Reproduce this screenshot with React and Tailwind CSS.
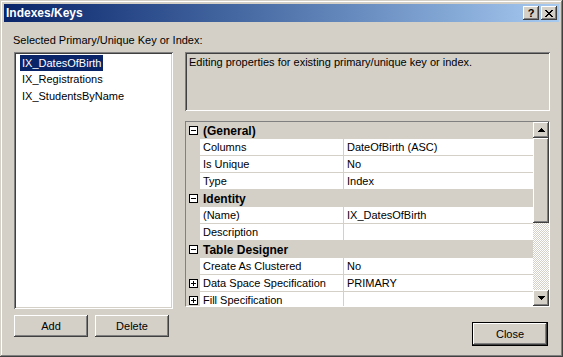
import React from 'react';

const raised = 'shadow-[inset_-1px_-1px_0_#404040,inset_1px_1px_0_#fff,inset_-2px_-2px_0_#808080,inset_2px_2px_0_#d4d0c8]';
const sunken = 'shadow-[inset_1px_1px_0_#808080,inset_-1px_-1px_0_#fff,inset_2px_2px_0_#404040,inset_-2px_-2px_0_#d4d0c8]';

const rows = [
  { cat: '(General)' },
  { label: 'Columns', value: 'DateOfBirth (ASC)' },
  { label: 'Is Unique', value: 'No' },
  { label: 'Type', value: 'Index' },
  { cat: 'Identity' },
  { label: '(Name)', value: 'IX_DatesOfBirth' },
  { label: 'Description', value: '' },
  { cat: 'Table Designer' },
  { label: 'Create As Clustered', value: 'No' },
  { label: 'Data Space Specification', value: 'PRIMARY', expand: true },
  { label: 'Fill Specification', value: '', expand: true },
];

function Toggle({ open }) {
  return (
    <svg width="9" height="9" viewBox="0 0 9 9" className="block" shapeRendering="crispEdges">
      <rect x="0.5" y="0.5" width="8" height="8" fill="#fff" stroke="#000" />
      <path d="M2 4h5v1H2z" fill="#000" />
      {!open && <path d="M4 2h1v5H4z" fill="#000" />}
    </svg>
  );
}

function Arrow({ down }) {
  return (
    <svg width="7" height="4" viewBox="0 0 7 4" className={down ? 'block rotate-180' : 'block'} shapeRendering="crispEdges">
      <path d="M3 0h1v1H3z M2 1h3v1H2z M1 2h5v1H1z M0 3h7v1H0z" fill="#000" />
    </svg>
  );
}

function Button({ children, className = '' }) {
  return (
    <div className={`h-[22px] w-[74px] flex items-center justify-center bg-[#d4d0c8] ${raised} ${className}`}>
      {children}
    </div>
  );
}

function PropRow({ row }) {
  if (row.cat) {
    return (
      <div className="h-[17px] flex items-center bg-[#d4d0c8]">
        <div className="w-[14px] pl-[3px]"><Toggle open /></div>
        <span className="pl-[3px] font-bold text-[12px]">{row.cat}</span>
      </div>
    );
  }
  return (
    <div className="h-[17px] flex">
      <div className="w-[14px] pl-[3px] flex items-center bg-[#d4d0c8]">
        {row.expand && <Toggle />}
      </div>
      <div className="w-[144px] bg-white border-b border-r border-[#d4d0c8] pl-[3px] leading-[16px] whitespace-nowrap overflow-hidden">
        {row.label}
      </div>
      <div className="flex-1 bg-white border-b border-[#d4d0c8] pl-[3px] leading-[16px] whitespace-nowrap overflow-hidden">
        {row.value}
      </div>
    </div>
  );
}

export default function App() {
  return (
    <div className={`w-[563px] h-[357px] bg-[#d4d0c8] p-[4px] flex flex-col text-[11px] text-black font-['Liberation_Sans',Arial,sans-serif] shadow-[inset_-1px_-1px_0_#404040,inset_1px_1px_0_#d4d0c8,inset_-2px_-2px_0_#808080,inset_2px_2px_0_#fff]`}>
      <div className="h-[18px] flex items-center justify-between pl-[2px] pr-[2px] bg-gradient-to-r from-[#0a246a] to-[#a6caf0]">
        <span className="text-white font-bold text-[12px]">Indexes/Keys</span>
        <div className="flex gap-[2px]">
          <div className={`w-[16px] h-[14px] flex items-center justify-center bg-[#d4d0c8] ${raised} font-bold text-[11px] leading-none`}>?</div>
          <div className={`w-[16px] h-[14px] flex items-center justify-center bg-[#d4d0c8] ${raised}`}>
            <svg width="8" height="7" viewBox="0 0 8 7" shapeRendering="crispEdges" className="block">
              <path d="M0 0h2v1H0z M6 0h2v1H6z M1 1h2v1H1z M5 1h2v1H5z M2 2h4v1H2z M3 3h2v1H3z M2 4h4v1H2z M1 5h2v1H1z M5 5h2v1H5z M0 6h2v1H0z M6 6h2v1H6z" fill="#000" />
            </svg>
          </div>
        </div>
      </div>

      <div className="mt-[10px] pl-[9px] h-[16px] leading-[16px]">Selected Primary/Unique Key or Index:</div>

      <div className="mt-[4px] flex pl-[10px]">
        <div className="w-[159px] flex flex-col">
          <div className={`h-[257px] bg-white p-[2px] pl-[6px] ${sunken}`}>
            <div className="h-[17px] flex items-center">
              <span className="bg-[#0a246a] text-white px-[2px] leading-[16px]">IX_DatesOfBirth</span>
            </div>
            <div className="h-[17px] leading-[17px] px-[2px]">IX_Registrations</div>
            <div className="h-[17px] leading-[17px] px-[2px]">IX_StudentsByName</div>
          </div>
          <div className="mt-[6px] flex gap-[7px]">
            <Button>Add</Button>
            <Button>Delete</Button>
          </div>
        </div>

        <div className="w-[365px] ml-[12px] flex flex-col">
          <div className={`h-[59px] p-[2px] pl-[4px] leading-[16px] ${sunken}`}>
            Editing properties for existing primary/unique key or index.
          </div>
          <div className="mt-[10px] h-[186px] border border-[#808080] border-r-white border-b-white flex">
            <div className="w-[347px] overflow-hidden">
              {rows.map((r, i) => <PropRow key={i} row={r} />)}
            </div>
            <div className="w-[16px] flex flex-col">
              <div className={`h-[16px] flex items-center justify-center ${raised}`}><Arrow /></div>
              <div className={`h-[85px] ${raised}`} />
              <div className="flex-1 bg-[repeating-conic-gradient(#d4d0c8_0_25%,#fff_0_50%)] bg-[length:2px_2px]" />
              <div className={`h-[16px] flex items-center justify-center ${raised}`}><Arrow down /></div>
            </div>
          </div>
          <div className="mt-[15px] self-end mr-[2px] border border-black">
            <Button>Close</Button>
          </div>
        </div>
      </div>
    </div>
  );
}
